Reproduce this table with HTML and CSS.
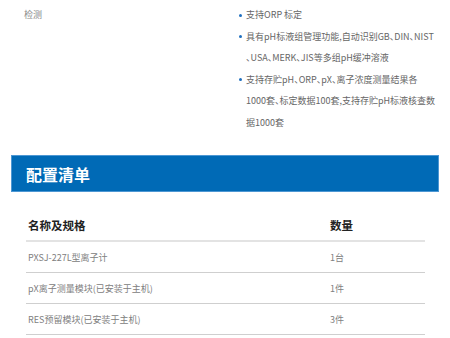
FILE: index.html
```html
<!DOCTYPE html>
<html lang="zh-CN">
<head>
<meta charset="utf-8">
<title>配置清单</title>
<link rel="stylesheet" href="styles.css">
</head>
<body>
<div class="spec">
  <div class="spec-label">检测</div>
  <ul class="spec-list">
    <li>支持ORP 标定</li>
    <li>具有pH标液组管理功能,自动识别GB、DIN、NIST<br>、USA、MERK、JIS等多组pH缓冲溶液</li>
    <li>支持存贮pH、ORP、pX、离子浓度测量结果各<br>1000套、标定数据100套,支持存贮pH标液核查数<br>据1000套</li>
  </ul>
</div>
<h2 class="section-title">配置清单</h2>
<table class="config">
  <thead>
    <tr><th class="col-name">名称及规格</th><th>数量</th></tr>
  </thead>
  <tbody>
    <tr><td>PXSJ-227L型离子计</td><td>1台</td></tr>
    <tr><td>pX离子测量模块(已安装于主机)</td><td>1件</td></tr>
    <tr><td>RES预留模块(已安装于主机)</td><td>3件</td></tr>
  </tbody>
</table>
</body>
</html>
```
FILE: styles.css
```css
html, body {
  margin: 0;
  padding: 0;
  background: #fff;
  font-family: "Noto Sans CJK SC", "Noto Sans", sans-serif;
}

.spec {
  display: grid;
  grid-template-columns: 239px 1fr;
  padding-top: 4px;
  font-size: 9px;
  line-height: 21.5px;
  color: #666;
}

.spec-label {
  padding-left: 24px;
  color: #888;
}

.spec-list {
  margin: 0;
  padding: 0;
  list-style: none;
  white-space: nowrap;
  font-feature-settings: "halt";
}

.spec-list li {
  display: flex;
  align-items: flex-start;
}

.spec-list li::before {
  content: "";
  flex: none;
  width: 3px;
  height: 3px;
  border-radius: 50%;
  background: #1f6fbf;
  margin: 9.5px 4px 0 0;
}

.section-title {
  margin: 22px 11px 0;
  height: 35px;
  padding-left: 14px;
  display: flex;
  align-items: center;
  background: #006ab6;
  border: 1px solid #4d97d3;
  color: #fff;
  font-size: 16px;
  font-weight: 700;
}

.config {
  margin: 18px 25px 0 26px;
  width: 399px;
  border-collapse: collapse;
}

.config th,
.config td {
  text-align: left;
  padding: 0 0 0 2px;
  vertical-align: middle;
}

.config th {
  height: 30px;
  font-size: 11.5px;
  font-weight: 700;
  color: #222;
  border-bottom: 2px solid #e3e3e3;
}

.config th.col-name {
  width: 300px;
}

.config td {
  height: 30px;
  font-size: 9px;
  color: #808080;
  border-bottom: 1px solid #cfcfcf;
}
```
